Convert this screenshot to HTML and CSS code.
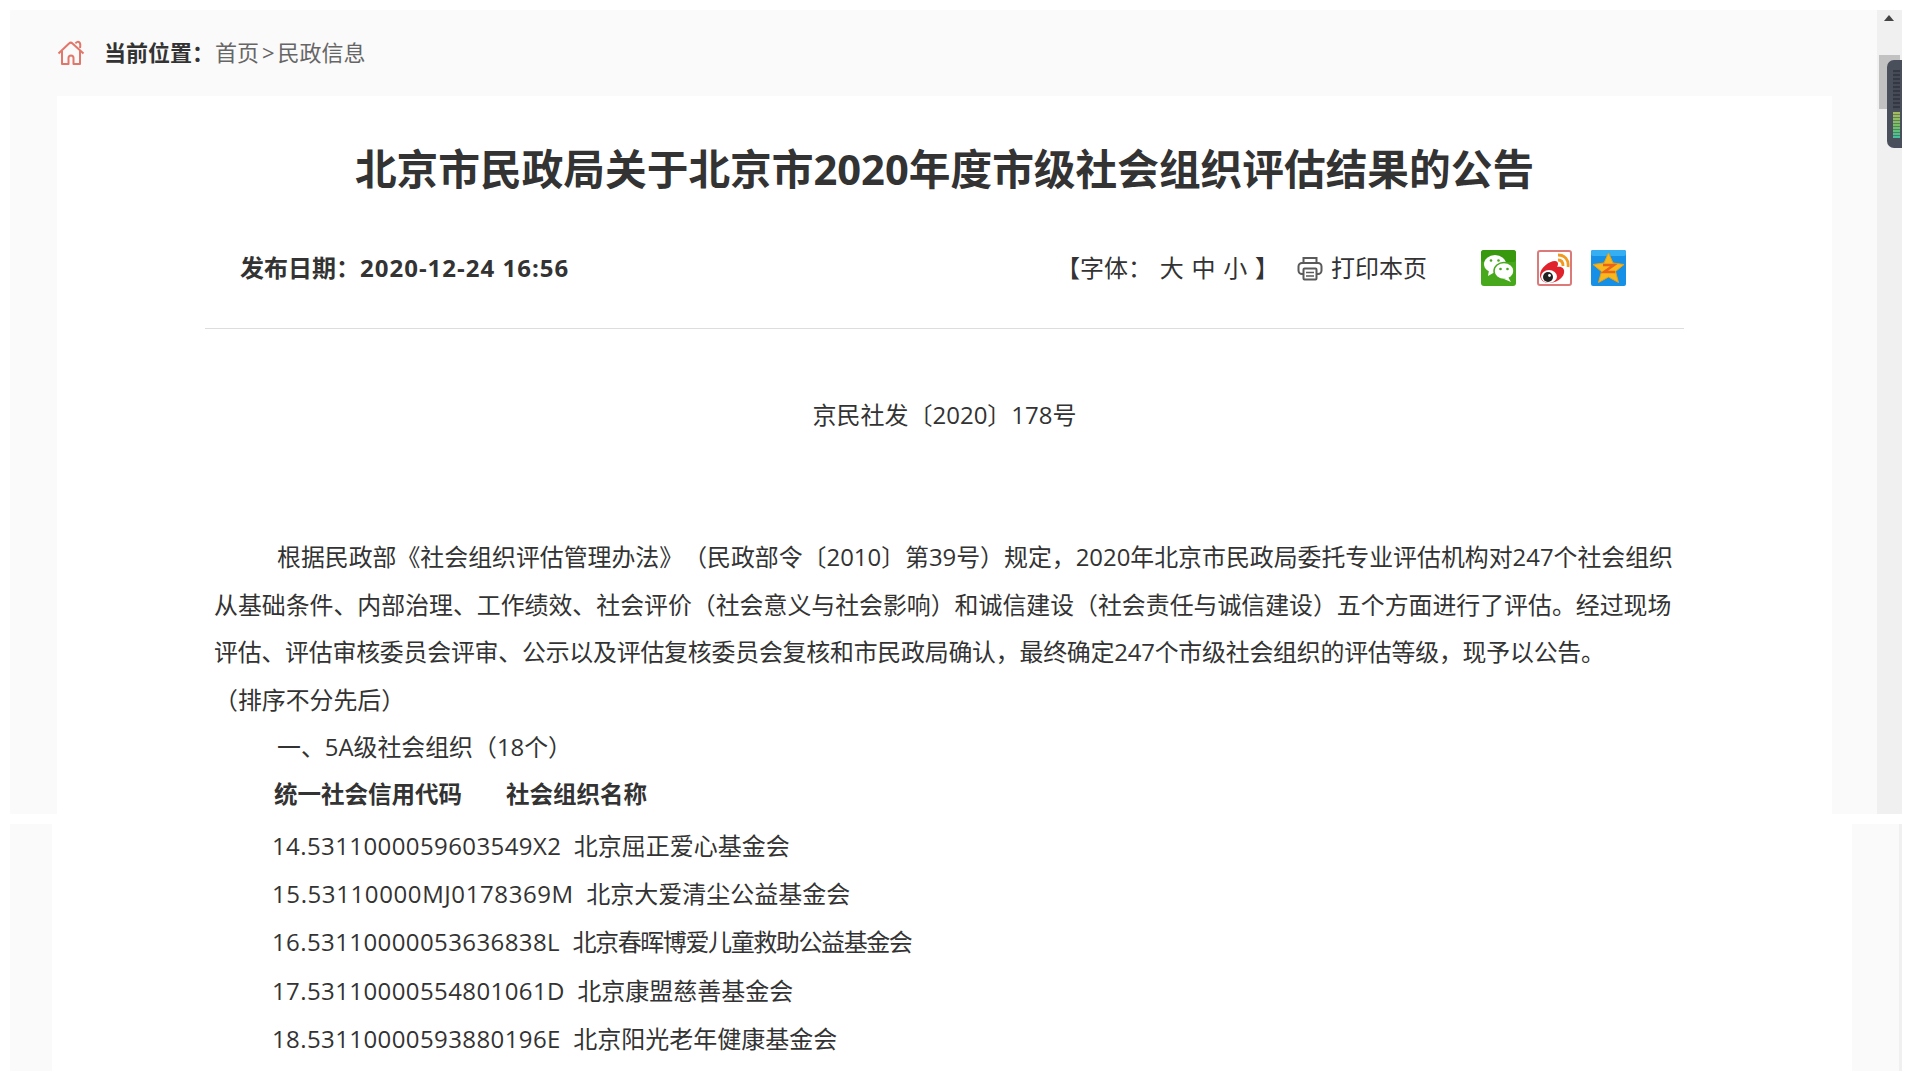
FILE: index.html
```html
<!DOCTYPE html>
<html lang="zh-CN">
<head>
  <meta charset="UTF-8">
  <title>北京市民政局关于北京市2020年度市级社会组织评估结果的公告</title>
  <link rel="stylesheet" href="styles.css">
</head>
<body>
  <div class="shot shot-top">
    <div class="page-main">
      <div class="crumb">
        <svg class="home-icon" width="28" height="26" viewBox="0 0 28 26" fill="none" stroke="#e2766a" stroke-width="2" stroke-linejoin="round">
          <path d="M1.500 13.500 12 3.500c1-1 2.500-1 3.500 0l11 10"/>
          <path d="M18.500 3.500c1-2 3-2 4-1s1 3 .5 5.500"/>
          <path d="M5 11v13h6.500v-6a2.500 2.500 0 0 1 5 0v6H23V11"/>
        </svg>
        <b>当前位置：</b><span class="crumb-links">首页<i class="crumb-sep">&gt;</i>民政信息</span>
      </div>
      <div class="card">
        <h1>北京市民政局关于北京市2020年度市级社会组织评估结果的公告</h1>
        <div class="meta">
          <div class="date">发布日期：<span class="date-num">2020-12-24 16:56</span></div>
          <div class="tools">
            <span class="fontsize">【字体： 大 中 小 】</span>
            <svg class="print-icon" width="26" height="25" viewBox="0 0 26 25" fill="none" stroke="#5a5a5a" stroke-width="2">
              <path d="M6.500 7V2h13v5"/>
              <rect x="1.500" y="7" width="23" height="11" rx="3.500"/>
              <rect x="6.500" y="12.500" width="13" height="11" rx="1" fill="#fff"/>
              <path d="M9 16.500h8M9 20h8" stroke-width="1.500"/>
            </svg>
            <span class="print-text">打印本页</span>
            <svg class="share" width="35" height="36" viewBox="0 0 35 36">
              <rect width="35" height="36" rx="3" fill="#46a81a"/>
              <rect width="35" height="12" rx="3" fill="#38990f"/>
              <ellipse cx="14" cy="14" rx="11" ry="9" fill="#fff"/>
              <path d="M8 20l-1 6 7-4z" fill="#fff"/>
              <ellipse cx="23" cy="21" rx="10" ry="8.500" fill="#fff" stroke="#46a81a" stroke-width="1.500"/>
              <path d="M27 27l3 5-7-3z" fill="#fff"/>
              <circle cx="10" cy="10.500" r="1.300" fill="#46a81a"/>
              <circle cx="17.500" cy="10.500" r="1.300" fill="#46a81a"/>
              <circle cx="19.500" cy="19" r="1.300" fill="#46a81a"/>
              <circle cx="26.500" cy="19" r="1.300" fill="#46a81a"/>
            </svg>
            <svg class="share share-weibo" width="35" height="36" viewBox="0 0 35 36">
              <rect x="1" y="1" width="33" height="34" rx="2" fill="#fff" stroke="#dc7a7a" stroke-width="2"/>
              <path d="M3 25c0-7 9-14 15-14 3 0 4 3 2 6 5-1 8 2 7 6-1 6-9 10-15 10-5 0-9-3-9-8z" fill="#e0222c"/>
              <ellipse cx="12" cy="26.500" rx="8" ry="6.500" fill="#fff"/>
              <circle cx="11" cy="27" r="5" fill="#222"/>
              <circle cx="12.500" cy="25.500" r="1.400" fill="#fff"/>
              <path d="M21 5c7 0 11 5 10 12M21 10c4 0 5 3 5 6" fill="none" stroke="#f29a1f" stroke-width="2.800"/>
            </svg>
            <svg class="share" width="35" height="36" viewBox="0 0 35 36">
              <rect width="35" height="36" rx="2" fill="#1590e6"/>
              <rect width="35" height="6" rx="2" fill="#36aef2"/>
              <path d="M17.500 3l4.500 10 11 1.500-8.500 7 3 11-10-5.500-10 5.500 3-11-8.500-7L13 13z" fill="#f7b71d" stroke="#e9a013"/>
              <path d="M12 15h11l-10 7h11" fill="none" stroke="#e8641b" stroke-width="2.500"/>
            </svg>
          </div>
        </div>
        <p class="doc-no">京民社发〔2020〕178号</p>
        <div class="article">
          <p class="indent">根据民政部《社会组织评估管理办法》（民政部令〔2010〕第39号）规定，2020年北京市民政局委托专业评估机构对247个社会组织<br>从基础条件、内部治理、工作绩效、社会评价（社会意义与社会影响）和诚信建设（社会责任与诚信建设）五个方面进行了评估。经过现场<br><span class="line-tight">评估、评估审核委员会评审、公示以及评估复核委员会复核和市民政局确认，最终确定247个市级社会组织的评估等级，现予以公告。</span><br>（排序不分先后）</p>
          <p class="indent">一、5A级社会组织（18个）</p>
          <p class="table-head"><b>统一社会信用代码</b><b>社会组织名称</b></p>
        </div>
      </div>
    </div>
    <div class="scroll-track">
      <span class="scroll-up"></span>
      <span class="scroll-thumb"></span>
    </div>
    <div class="meter">
      <span class="meter-dark"></span>
      <span class="meter-lit"></span>
    </div>
  </div>

  <div class="shot shot-bottom">
    <div class="side"></div>
    <ul class="org-list">
      <li><span class="org-code">14.5311000059603549X2</span>&nbsp;&nbsp;北京屈正爱心基金会</li>
      <li><span class="org-code org-code-wide">15.53110000MJ0178369M</span>&nbsp;&nbsp;北京大爱清尘公益基金会</li>
      <li><span class="org-code">16.53110000053636838L</span>&nbsp;&nbsp;<span class="org-tight">北京春晖博爱儿童救助公益基金会</span></li>
      <li><span class="org-code">17.53110000554801061D</span>&nbsp;&nbsp;北京康盟慈善基金会</li>
      <li><span class="org-code">18.53110000593880196E</span>&nbsp;&nbsp;北京阳光老年健康基金会</li>
    </ul>
    <div class="side side-right"></div>
    <div class="scroll-edge"></div>
  </div>
</body>
</html>
```

FILE: styles.css
```css
* {
  box-sizing: border-box;
}
body {
  margin: 0;
  padding: 10px;
  background-color: #fff;
  color: #333;
  font-family: "Open Sans", "Noto Sans CJK SC", sans-serif;
  font-size: 24px;
}
p, h1, ul {
  margin: 0;
  padding: 0;
}
.shot {
  display: flex;
  overflow: hidden;
}
.shot-top {
  position: relative;
  height: 804px;
}
.page-main {
  flex: 1;
  padding: 0 45px 0 47px;
  background-color: #fafafa;
}
.crumb {
  display: flex;
  align-items: center;
  height: 86px;
  padding-bottom: 5px;
  font-size: 22px;
}
.home-icon {
  margin: 4px 19px 0 0;
}
.crumb b {
  width: 111px;
}
.crumb-links {
  color: #666;
}
.crumb-sep {
  margin: 0 3px;
  font-style: normal;
}
.card {
  height: 720px;
  padding: 0 148px;
  background-color: #fff;
}
h1 {
  padding-top: 43px;
  height: 128px;
  text-align: center;
  font-size: 41.700px;
  line-height: 60px;
}
.meta {
  display: flex;
  align-items: center;
  justify-content: space-between;
  height: 105px;
  padding: 0 58px 19px 35px;
  border-bottom: 1px solid #ddd;
}
.date {
  font-size: 24px;
  font-weight: bold;
}
.date-num {
  letter-spacing: 1px;
}
.tools {
  display: flex;
  align-items: center;
}
.fontsize {
  white-space: pre;
  word-spacing: 1.500px;
}
.print-icon {
  margin: 4px 8px 0 18px;
}
.share {
  margin: 2px 0 0 19px;
}
.share-weibo {
  margin-left: 21px;
}
.print-text {
  margin-right: 35px;
}
.doc-no {
  margin-top: 62px;
  text-align: center;
  line-height: 48px;
}
.article {
  margin-top: 94px;
  padding-left: 9px;
  font-size: 23.900px;
  line-height: 47.500px;
  white-space: nowrap;
  text-spacing-trim: space-all;
}
.line-tight {
  letter-spacing: -0.200px;
}
.indent {
  text-indent: 63px;
}
.table-head {
  display: flex;
  gap: 44px;
  padding-left: 60px;
  font-size: 23.500px;
}
.scroll-track {
  position: relative;
  width: 25px;
  background-color: #f0f0f0;
}
.scroll-up {
  position: absolute;
  top: 5px;
  left: 7px;
  border: 5px solid transparent;
  border-top: 0;
  border-bottom: 6px solid #444;
}
.scroll-thumb {
  position: absolute;
  top: 45px;
  left: 2px;
  width: 21px;
  height: 54px;
  background-color: #c2c2c2;
}
.meter {
  position: absolute;
  top: 50px;
  right: 0;
  display: flex;
  flex-direction: column;
  gap: 2px;
  width: 15px;
  height: 88px;
  padding: 10px 2px 10px 6px;
  background-color: #4a4f5c;
  border-radius: 7px 0 0 7px;
}
.meter-dark {
  height: 40px;
  background: repeating-linear-gradient(#333844 0 2px, #454a56 2px 4px);
}
.meter-lit {
  height: 26px;
  background: repeating-linear-gradient(transparent 0 2px, rgba(60, 70, 70, 0.500) 2px 3px), linear-gradient(#a8bc5c, #6fc06a 60%, #3fc0a0);
}
.shot-bottom {
  height: 247px;
  margin-top: 10px;
}
.side {
  width: 42px;
  background-color: #fafafa;
}
.side-right {
  width: 47px;
}
.org-list {
  flex: 1;
  padding: 0 0 0 220px;
  list-style: none;
  line-height: 48.200px;
}
.org-list li:first-child {
  margin-top: -2px;
}
.org-code {
  letter-spacing: 0.400px;
}
.org-code-wide {
  letter-spacing: 0.600px;
}
.org-tight {
  letter-spacing: -1.400px;
}
.scroll-edge {
  width: 3px;
  background-color: #f0f0f0;
}
```
